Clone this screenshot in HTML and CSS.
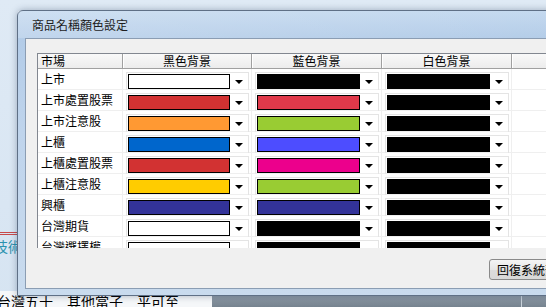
FILE: index.html
```html
<!DOCTYPE html>
<html>
  <head>
    <link rel="stylesheet" href="styles.css">
  </head>
  <body>
    <div class="desktop">
      <div class="parent">
        <div class="parent-main">
          <div class="side">
            <div class="red-rule"></div>
            <div class="side-tab">技術分析</div>
          </div>
        </div>
        <div class="parent-bottom">
          <div class="tabs">台灣五十　其他當子　平可至</div>
          <div class="bar"><div class="bar-split"></div></div>
        </div>
      </div>

      <div class="dialog">
        <div class="titlebar">商品名稱顏色設定</div>
        <div class="client">
          <div class="grid">
            <div class="grid-head">
              <div class="hcell name">市場</div>
              <div class="hcell c1">黑色背景</div>
              <div class="hcell c2">藍色背景</div>
              <div class="hcell c3">白色背景</div>
              <div class="hcell rest"></div>
            </div>

            <div class="grid-row">
              <div class="cell name">上市</div>
              <div class="cell c1"><div class="combo"><span class="swatch white"></span><span class="arrow"></span></div></div>
              <div class="cell c2"><div class="combo"><span class="swatch black"></span><span class="arrow"></span></div></div>
              <div class="cell c3"><div class="combo"><span class="swatch black"></span><span class="arrow"></span></div></div>
              <div class="cell rest"></div>
            </div>
            <div class="grid-row">
              <div class="cell name">上市處置股票</div>
              <div class="cell c1"><div class="combo"><span class="swatch red"></span><span class="arrow"></span></div></div>
              <div class="cell c2"><div class="combo"><span class="swatch rose"></span><span class="arrow"></span></div></div>
              <div class="cell c3"><div class="combo"><span class="swatch black"></span><span class="arrow"></span></div></div>
              <div class="cell rest"></div>
            </div>
            <div class="grid-row">
              <div class="cell name">上市注意股</div>
              <div class="cell c1"><div class="combo"><span class="swatch orange"></span><span class="arrow"></span></div></div>
              <div class="cell c2"><div class="combo"><span class="swatch lime"></span><span class="arrow"></span></div></div>
              <div class="cell c3"><div class="combo"><span class="swatch black"></span><span class="arrow"></span></div></div>
              <div class="cell rest"></div>
            </div>
            <div class="grid-row">
              <div class="cell name">上櫃</div>
              <div class="cell c1"><div class="combo"><span class="swatch blue"></span><span class="arrow"></span></div></div>
              <div class="cell c2"><div class="combo"><span class="swatch violet"></span><span class="arrow"></span></div></div>
              <div class="cell c3"><div class="combo"><span class="swatch black"></span><span class="arrow"></span></div></div>
              <div class="cell rest"></div>
            </div>
            <div class="grid-row">
              <div class="cell name">上櫃處置股票</div>
              <div class="cell c1"><div class="combo"><span class="swatch red"></span><span class="arrow"></span></div></div>
              <div class="cell c2"><div class="combo"><span class="swatch magenta"></span><span class="arrow"></span></div></div>
              <div class="cell c3"><div class="combo"><span class="swatch black"></span><span class="arrow"></span></div></div>
              <div class="cell rest"></div>
            </div>
            <div class="grid-row">
              <div class="cell name">上櫃注意股</div>
              <div class="cell c1"><div class="combo"><span class="swatch yellow"></span><span class="arrow"></span></div></div>
              <div class="cell c2"><div class="combo"><span class="swatch lime"></span><span class="arrow"></span></div></div>
              <div class="cell c3"><div class="combo"><span class="swatch black"></span><span class="arrow"></span></div></div>
              <div class="cell rest"></div>
            </div>
            <div class="grid-row">
              <div class="cell name">興櫃</div>
              <div class="cell c1"><div class="combo"><span class="swatch navy"></span><span class="arrow"></span></div></div>
              <div class="cell c2"><div class="combo"><span class="swatch navy"></span><span class="arrow"></span></div></div>
              <div class="cell c3"><div class="combo"><span class="swatch black"></span><span class="arrow"></span></div></div>
              <div class="cell rest"></div>
            </div>
            <div class="grid-row">
              <div class="cell name">台灣期貨</div>
              <div class="cell c1"><div class="combo"><span class="swatch white"></span><span class="arrow"></span></div></div>
              <div class="cell c2"><div class="combo"><span class="swatch black"></span><span class="arrow"></span></div></div>
              <div class="cell c3"><div class="combo"><span class="swatch black"></span><span class="arrow"></span></div></div>
              <div class="cell rest"></div>
            </div>
            <div class="grid-row">
              <div class="cell name">台灣選擇權</div>
              <div class="cell c1"><div class="combo"><span class="swatch white"></span><span class="arrow"></span></div></div>
              <div class="cell c2"><div class="combo"><span class="swatch black"></span><span class="arrow"></span></div></div>
              <div class="cell c3"><div class="combo"><span class="swatch black"></span><span class="arrow"></span></div></div>
              <div class="cell rest"></div>
            </div>
          </div>

          <div class="footer">
            <button class="btn">回復系統預設值</button>
          </div>
        </div>
      </div>
    </div>
  </body>
</html>
```

FILE: styles.css
```css
body {
  margin: 0;
  font-family: "Noto Sans CJK TC", "Noto Sans", sans-serif;
  font-size: 12px;
  color: #000;
}
.desktop {
  position: relative;
  width: 546px;
  height: 307px;
  overflow: hidden;
  background: linear-gradient(to bottom, #dfeaf5, #d6e4f2);
}

/* window behind the dialog */
.parent {
  display: flex;
  flex-direction: column;
  height: 307px;
}
.parent-main {
  flex: 1;
}
.side {
  width: 17px;
  padding-top: 232px;
  overflow: hidden;
}
.red-rule {
  height: 1px;
  border-top: 1px solid #c8494a;
  border-bottom: 1px solid #c8494a;
}
.side-tab {
  margin: 3px 0 0 -6px;
  font-size: 14px;
  line-height: 16px;
  color: #2a92ae;
  white-space: nowrap;
}
.parent-bottom {
  display: flex;
  height: 16px;
}
.tabs {
  width: 215px;
  margin-left: -3px;
  font-size: 14px;
  line-height: 20px;
  white-space: nowrap;
  overflow: hidden;
  background: #f5f7f9;
}
.bar {
  flex: 1;
  background: linear-gradient(to bottom, #9aa6b2, #76838f);
}
.bar-split {
  width: 1px;
  height: 16px;
  margin-left: 309px;
  background: #c9d2da;
}

/* dialog window */
.dialog {
  position: absolute;
  left: 17px;
  top: 10px;
  width: 560px;
  height: 286px;
  box-sizing: border-box;
  padding: 0 0 6px 7px;
  display: flex;
  flex-direction: column;
  border: 1px solid #5f7086;
  border-radius: 6px 6px 0 0;
  background: linear-gradient(to bottom, #c4d9ef 0, #b3cce8 28px, #bfd4ec 120px, #c9dbee 100%);
  box-shadow: 0 0 7px rgba(30, 50, 80, 0.35);
}
.titlebar {
  height: 27px;
  line-height: 28px;
  padding-left: 7px;
  color: #1e1e1e;
  background: linear-gradient(to right, rgba(255, 255, 255, 0.18), rgba(255, 255, 255, 0));
  margin-left: -7px;
  padding-left: 14px;
}
.client {
  height: 251px;
  box-sizing: border-box;
  border: 1px solid #8b9db3;
  border-right: none;
  background: #f0f0f0;
}

/* color grid */
.grid {
  height: 195px;
  box-sizing: border-box;
  margin: 14px 0 0 11px;
  overflow: hidden;
  border-top: 1px solid #828790;
  border-left: 1px solid #828790;
  background: #fff;
}
.grid-head {
  display: flex;
  height: 15px;
  box-sizing: border-box;
  border-bottom: 1px solid #a0a0a0;
  background: linear-gradient(to bottom, #f9f9f9, #ececec);
}
.hcell {
  box-sizing: border-box;
  border-right: 1px solid #a0a0a0;
  box-shadow: inset 1px 0 #fff;
  line-height: 13px;
  text-align: center;
}
.hcell.name {
  text-align: left;
  padding-left: 3px;
  box-shadow: none;
}
.grid-row {
  display: flex;
  height: 21px;
  box-sizing: border-box;
  border-bottom: 1px solid #efefef;
}
.cell {
  box-sizing: border-box;
  border-right: 1px solid #efefef;
  display: flex;
}
.cell.name {
  padding-left: 3px;
  line-height: 20px;
  white-space: nowrap;
}
.name {
  width: 85px;
}
.c1 {
  width: 129px;
}
.c2,
.c3 {
  width: 130px;
}
.rest {
  flex: 1;
  border-right: none;
}
.combo {
  flex: 1;
  display: flex;
  height: 18px;
  box-sizing: border-box;
  margin: 3px 2px 0 3px;
  border: 1px solid #e4e4e4;
  border-bottom: none;
}
.swatch {
  flex: 1;
  height: 15px;
  box-sizing: border-box;
  margin: 1px 0 0 1px;
  border: 1px solid #000;
}
.arrow {
  width: 18px;
  display: flex;
  align-items: center;
  justify-content: center;
}
.arrow::after {
  content: "";
  border-top: 4px solid #000;
  border-left: 4px solid transparent;
  border-right: 4px solid transparent;
}

.white { background: #fff; }
.black { background: #000; }
.red { background: #d23232; }
.rose { background: #e0394a; }
.orange { background: #ff9933; }
.lime { background: #99cc33; }
.blue { background: #0066cc; }
.violet { background: #4d4dff; }
.magenta { background: #ec008c; }
.yellow { background: #ffcc00; }
.navy { background: #333399; }

.footer {
  padding: 11px 0 0 463px;
}
.btn {
  height: 21px;
  padding: 0 7px;
  font-family: "Noto Sans CJK TC", "Noto Sans", sans-serif;
  font-size: 12px;
  line-height: 19px;
  white-space: nowrap;
  border: 1px solid #8a8a8a;
  border-radius: 3px;
  background: linear-gradient(to bottom, #f4f4f4, #e6e6e6 50%, #dcdcdc 51%, #d8d8d8);
}
```
